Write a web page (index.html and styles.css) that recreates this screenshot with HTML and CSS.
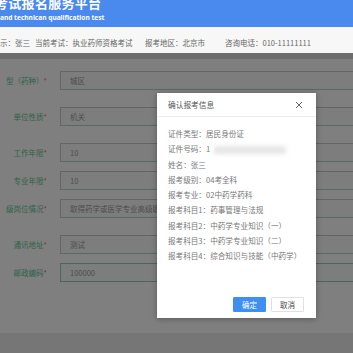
FILE: index.html
```html
<!DOCTYPE html>
<html lang="zh-CN">
<head>
<meta charset="utf-8">
<title>考试报名服务平台</title>
<link rel="stylesheet" href="styles.css">
</head>
<body>
<div class="page">
  <header class="banner">
    <div class="title">考试报名服务平台</div>
    <div class="subtitle">and technican qualification test</div>
  </header>
  <div class="info">
    <span>示：张三</span>
    <span>当前考试：执业药师资格考试</span>
    <span>报考地区：北京市</span>
    <span>咨询电话：010-11111111</span>
  </div>
  <main class="content">
    <div class="strip"></div>
    <form class="form">
      <div class="row gap-l"><label><span>型（药种）</span><i>*</i></label><div class="field">城区</div></div>
      <div class="row gap-l"><label><span>单位性质</span><i>*</i></label><div class="field">机关</div></div>
      <div class="row gap-s"><label><span>工作年限</span><i>*</i></label><div class="field">10</div></div>
      <div class="row gap-s"><label><span>专业年限</span><i>*</i></label><div class="field">10</div></div>
      <div class="row gap-l"><label><span>级岗位情况</span><i>*</i></label><div class="field">取得药学或医学专业高级职称</div></div>
      <div class="row gap-s"><label><span>通讯地址</span><i>*</i></label><div class="field">测试</div></div>
      <div class="row"><label><span>邮政编码</span><i>*</i></label><div class="field focus">100000</div></div>
    </form>
    <footer class="foot"></footer>
    <div class="overlay"></div>
  </main>
  <div class="modal">
    <div class="modal-head">
      <span>确认报考信息</span>
      <svg class="close" width="8" height="8" viewBox="0 0 8 8"><path d="M1 1L7 7M7 1L1 7" stroke="#666" stroke-width="1" fill="none"/></svg>
    </div>
    <div class="modal-body">
      <p>证件类型：居民身份证</p>
      <p>证件号码：1<span class="blur"></span></p>
      <p>姓名：张三</p>
      <p>报考级别：04考全科</p>
      <p>报考专业：02中药学药科</p>
      <p>报考科目1：药事管理与法规</p>
      <p>报考科目2：中药学专业知识（一）</p>
      <p>报考科目3：中药学专业知识（二）</p>
      <p>报考科目4：综合知识与技能（中药学）</p>
    </div>
    <div class="modal-foot">
      <button class="btn primary" type="button">确定</button>
      <button class="btn" type="button">取消</button>
    </div>
  </div>
</div>
</body>
</html>
```
FILE: styles.css
```css
* { box-sizing: border-box; }
html, body { margin: 0; padding: 0; }
body {
  width: 353px;
  height: 353px;
  overflow: hidden;
  font-family: "Noto Sans CJK SC", "Noto Sans", sans-serif;
  background: #fff;
}
.page {
  position: relative;
  width: 353px;
  height: 353px;
  display: flex;
  flex-direction: column;
}
.banner {
  height: 27px;
  background: #4a89ee;
  color: #fff;
  overflow: hidden;
  flex: none;
}
.title {
  font-size: 13px;
  line-height: 13px;
  font-weight: 700;
  margin-top: -4px;
  margin-left: -5px;
  letter-spacing: 0.3px;
  white-space: nowrap;
}
.subtitle {
  font-family: "Noto Sans", sans-serif;
  font-size: 6.6px;
  line-height: 8px;
  font-weight: 700;
  margin-top: 5px;
  white-space: nowrap;
}
.info {
  height: 26px;
  flex: none;
  background: #f7f7f7;
  display: grid;
  grid-template-columns: 35px 110px 80px auto;
  align-items: center;
  font-size: 7.5px;
  color: #666;
  white-space: nowrap;
  padding-top: 4px;
}
.content {
  position: relative;
  flex: 1;
  display: flex;
  flex-direction: column;
  background: #fff;
  overflow: hidden;
}
.strip {
  height: 6px;
  background: #dcdcdc;
  flex: none;
}
.form {
  flex: 1;
  padding-top: 12px;
  margin: 0;
}
.row {
  display: grid;
  grid-template-columns: 47px 300px;
  column-gap: 13px;
  align-items: center;
  height: 19px;
}
.gap-l { margin-bottom: 17px; }
.gap-s { margin-bottom: 9px; }
.row label {
  display: flex;
  justify-content: flex-end;
  font-size: 7.5px;
  color: #5cc890;
  white-space: nowrap;
}
.row label span { flex: none; }
.row label i {
  flex: none;
  font-style: normal;
  color: #ff6a6a;
}
.field {
  height: 19px;
  border: 1px solid #c8c8c8;
  border-bottom-color: #a8d8c4;
  background: #fbfbfb;
  padding-left: 9px;
  font-size: 7.5px;
  line-height: 17px;
  color: #9a9a9a;
  white-space: nowrap;
}
.field.focus {
  border: 1px solid #8fd3b6;
}
.foot {
  height: 20px;
  background: #ececec;
  flex: none;
}
.overlay {
  position: absolute;
  inset: 0;
  background: rgba(0, 0, 0, 0.5);
}
.modal {
  position: absolute;
  left: 157px;
  top: 93px;
  width: 159px;
  height: 225px;
  background: #fff;
  box-shadow: 0 1px 6px rgba(0, 0, 0, 0.3);
  display: flex;
  flex-direction: column;
}
.modal-head {
  height: 24px;
  border-bottom: 1px solid #eee;
  display: flex;
  align-items: center;
  justify-content: space-between;
  padding: 0 11px;
  font-size: 7.7px;
  color: #555;
}
.close { margin-right: 2px; }
.modal-body {
  padding: 9px 11px 0;
  font-size: 7.6px;
  color: #777;
}
.modal-body p {
  margin: 0;
  line-height: 15.3px;
  white-space: nowrap;
}
.blur {
  display: inline-block;
  width: 72px;
  height: 8px;
  margin-left: 4px;
  vertical-align: middle;
  background: #e6e6e6;
  filter: blur(2px);
}
.modal-foot {
  margin-top: auto;
  display: flex;
  justify-content: flex-end;
  gap: 5px;
  padding: 0 12px 6px;
}
.btn {
  width: 33px;
  height: 15px;
  padding: 0;
  border: 1px solid #e0e0e0;
  background: #fff;
  font-family: "Noto Sans CJK SC", sans-serif;
  font-size: 7.5px;
  color: #444;
  border-radius: 1px;
}
.btn.primary {
  background: #3d8ff0;
  border-color: #3d8ff0;
  color: #fff;
}
```
